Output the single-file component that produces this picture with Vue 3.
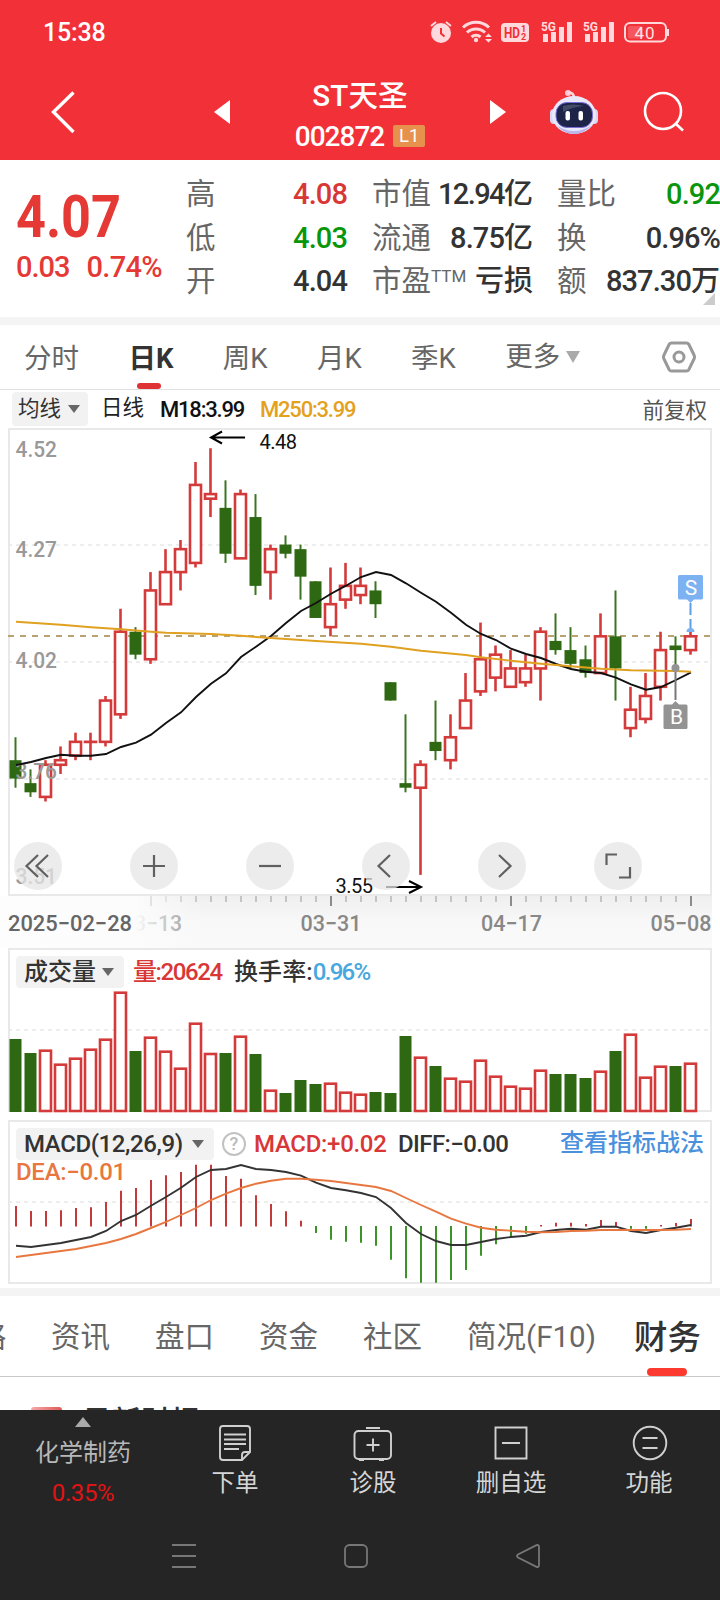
<template>
  <div class="page">
    <header class="top">
      <div class="status">
        <span class="clock">15:38</span>
        <svg class="status-icons" width="262" height="30" viewBox="420 16 262 30">
          <!-- alarm -->
          <circle cx="441" cy="33" r="10" class="soft" />
          <path d="M441 28v5.5l3.5 3" class="cut" />
          <path d="M431 26l5-4M451 26l-5-4" class="soft-line" />
          <!-- wifi -->
          <path d="M463 27.500a19 19 0 0 1 26 0M467 32.500a13 13 0 0 1 18 0M471.500 37a7 7 0 0 1 9 0" class="soft-line thick" />
          <circle cx="476" cy="40" r="2.200" class="soft" />
          <path d="M485 37l3.500-3.500l3.500 3.500zM485 39l3.500 3.500l3.500-3.500z" class="soft" />
          <!-- hd -->
          <rect x="501" y="23" width="28" height="19" rx="4" class="soft" />
          <text x="504" y="38" class="hd" textLength="16" lengthAdjust="spacingAndGlyphs">HD</text>
          <text x="521" y="31.500" class="hd-small">1</text>
          <text x="521" y="40" class="hd-small">2</text>
          <!-- signal x2 -->
          <g v-for="x in [541, 583]" :key="x">
            <text :x="x" y="31" class="net" textLength="15" lengthAdjust="spacingAndGlyphs">5G</text>
            <path :d="`M${x + 2} 34h5v8h-5zM${x + 10} 32h5v10h-5zM${x + 18} 27h5v15h-5zM${x + 26} 22h5v20h-5z`" class="soft" />
          </g>
          <!-- battery -->
          <rect x="625" y="23" width="41" height="18.500" rx="5" class="soft-line" />
          <rect x="628" y="26" width="15" height="12.500" rx="2" class="charge" />
          <path d="M668 29v7" class="soft-line" />
          <text x="634.500" y="38.500" class="battery" textLength="20">40</text>
        </svg>
      </div>

      <div class="title-bar">
        <svg class="back" width="30" height="48" viewBox="48 86 30 48">
          <path d="M73.500 90.500L53.500 110L73.500 130" />
        </svg>
        <svg class="prev" width="16" height="24" viewBox="0 0 16 24"><path d="M16 0v24L0 12z" /></svg>
        <div class="stock">
          <div class="name">ST天圣</div>
          <div class="code"><span>002872</span><em>L1</em></div>
        </div>
        <svg class="next" width="16" height="24" viewBox="0 0 16 24"><path d="M0 0v24l16-12z" /></svg>
        <svg class="robot" width="50" height="46" viewBox="549 87 50 46">
          <circle cx="568" cy="91" r="3" fill="#ffc8d4" />
          <path d="M568 91q6-1 6 5" fill="none" stroke="#ffd5de" stroke-width="2.500" />
          <rect x="550" y="107" width="8" height="15" rx="4" fill="#d6d7f5" />
          <rect x="590" y="107" width="8" height="15" rx="4" fill="#d6d7f5" />
          <ellipse cx="574" cy="113" rx="22" ry="19" fill="#e9e9fb" />
          <path d="M556 123q18 12 36 0q-8 9-18 9t-18-9z" fill="#b9b7ec" />
          <rect x="556" y="100.500" width="36.500" height="25" rx="11" fill="#1d2448" stroke="#7a6fd8" stroke-width="1" />
          <path d="M563 104q10-3 21 0q-12 1-21 6z" fill="#444b68" />
          <rect x="565.500" y="109" width="4.500" height="9.500" rx="2" fill="#fff" />
          <rect x="578.500" y="109" width="4.500" height="9.500" rx="2" fill="#fff" />
        </svg>
        <svg class="search" width="44" height="44" viewBox="642 90 44 44">
          <circle cx="663" cy="111" r="18" />
          <path d="M675.500 123.500L683 130.500" />
        </svg>
      </div>
    </header>

    <section class="quote">
      <div class="last">
        <div class="price">4.07</div>
        <div class="change"><span>0.03</span><span>0.74%</span></div>
      </div>
      <div v-for="(col, c) in quoteCols" :key="c" class="quote-col">
        <div v-for="row in col" :key="row.label" class="quote-row">
          <span class="label">{{ row.label }}<sup v-if="row.sup">{{ row.sup }}</sup></span>
          <span class="value" :class="row.tone">{{ row.value }}<b v-if="row.unit">{{ row.unit }}</b></span>
        </div>
      </div>
      <i class="corner"></i>
    </section>

    <nav class="periods">
      <span v-for="p in periods" :key="p" :class="{ active: p === '日K' }">{{ p }}</span>
      <span class="more">更多<i></i></span>
      <svg class="gear" width="34" height="32" viewBox="663 341 34 32">
        <path d="M672.500 343h15q1.500 0 2.300 1.300l5.200 10.700q1 2 0 4l-5.200 10.700q-.8 1.300-2.300 1.300h-15q-1.500 0-2.300-1.300l-5.200-10.700q-1-2 0-4l5.200-10.700q.8-1.300 2.300-1.300z" />
        <circle cx="680" cy="357" r="5" />
      </svg>
    </nav>

    <div class="ma-bar">
      <span class="pill">均线<i></i></span>
      <span class="ma-name">日线</span>
      <span class="ma18">M18:3.99</span>
      <span class="ma250">M250:3.99</span>
      <span class="adjust">前复权</span>
    </div>

    <div class="panel">
      <svg class="chart" width="720" height="520" viewBox="0 428 720 520">
        <defs>
          <linearGradient id="axisBg" x1="0" y1="0" x2="0" y2="1">
            <stop offset="0" stop-color="#efefef" />
            <stop offset=".5" stop-color="#f8f8f8" />
            <stop offset="1" stop-color="#fafafa" />
          </linearGradient>
          <linearGradient id="axisFade" x1="0" y1="0" x2="1" y2="0">
            <stop offset="0" stop-color="#fdfdfd" />
            <stop offset=".66" stop-color="#fcfcfc" />
            <stop offset="1" stop-color="#fafafa" stop-opacity="0" />
          </linearGradient>
        </defs>

        <rect x="9" y="429" width="702" height="466" class="frame" />
        <path d="M8 545H710M8 662H710M8 779H710" class="grid" />
        <path d="M8 636H712" class="last-line" />

        <g v-for="(k, i) in candles" :key="i" :class="k[0] ? 'up' : 'down'">
          <path :d="`M${cx(i)} ${py(k[1])}V${py(k[4])}`" class="wick" />
          <rect
            :x="cx(i) - (k[0] ? 5.500 : 6)"
            :y="py(k[2])"
            :width="k[0] ? 11 : 12"
            :height="Math.max(py(k[3]) - py(k[2]), k[0] ? 0.1 : 2)"
            class="body"
          />
        </g>

        <text v-for="t in priceLabels" :key="t.text" x="15.500" :y="t.y" class="axis-label" textLength="41.500" lengthAdjust="spacingAndGlyphs">{{ t.text }}</text>

        <polyline :points="line(ma18)" class="ma18-line" />
        <polyline :points="ma250.map(([i, y]) => `${cx(i) + 0.5},${y}`).join(' ')" class="ma250-line" />

        <!-- high / low markers -->
        <path d="M245 437.500H211M222 431.500L211 437.500L222 443.500" class="arrow" />
        <text x="259.500" y="449" class="mark" textLength="37.500">4.48</text>
        <path d="M386 887H421M409 881L421 887L409 893" class="arrow" />
        <text x="335.500" y="893" class="mark" textLength="37.500">3.55</text>

        <!-- trade markers -->
        <path d="M690.500 603V615M690.500 619V630" class="sell-line" />
        <path d="M686.500 632a4 4 0 0 1 8 0z" class="sell" />
        <path d="M678 576.500q0-1.500 1.500-1.500h22q1.500 0 1.500 1.500v21.500q0 1.500-1.500 1.500h-7.500l-3.500 3.500l-3.500-3.500h-7.500q-1.500 0-1.500-1.500z" class="sell" />
        <text x="691" y="594.500" class="flag">S</text>
        <circle cx="675.500" cy="668" r="4" class="buy" />
        <path d="M675.500 672V700" class="buy-line" />
        <path d="M665 704.500h7l3.500-3.500l3.500 3.500h7q1.500 0 1.500 1.500v21.500q0 1.500-1.500 1.500h-21q-1.500 0-1.500-1.500v-21.500q0-1.500 1.500-1.500z" class="buy" />
        <text x="676.500" y="724" class="flag">B</text>

        <!-- date axis -->
        <rect x="0" y="896" width="712" height="52" fill="url(#axisBg)" />
        <path v-for="i in ticks" :key="i" :d="`M${cx(i) + 0.5} 896V${i % 12 === 9 ? 906 : 902}`" :class="i % 12 === 9 ? 'tick major' : 'tick'" />
        <text x="122" y="931" class="date" textLength="60" lengthAdjust="spacingAndGlyphs">03−13</text>
        <rect x="0" y="896" width="205" height="52" fill="url(#axisFade)" />
        <text x="8" y="931" class="date first" textLength="124" lengthAdjust="spacingAndGlyphs">2025−02−28</text>
        <text x="300.500" y="931" class="date" textLength="61" lengthAdjust="spacingAndGlyphs">03−31</text>
        <text x="481" y="931" class="date" textLength="61" lengthAdjust="spacingAndGlyphs">04−17</text>
        <text x="650.500" y="931" class="date" textLength="61" lengthAdjust="spacingAndGlyphs">05−08</text>
      </svg>

      <div class="tools">
        <button v-for="d in toolIcons" :key="d">
          <svg width="48" height="48" viewBox="0 0 48 48"><path :d="d" /></svg>
        </button>
      </div>
    </div>

    <div class="panel">
      <svg class="chart" width="720" height="172" viewBox="0 948 720 172">
        <rect x="9" y="949" width="702" height="162" class="frame" />
        <path d="M8 1030H710" class="grid" />
        <g v-for="(h, i) in volumes" :key="i" :class="candles[i][0] ? 'up' : 'down'">
          <rect v-if="candles[i][0]" :x="cx(i) - 5.500" :y="1113 - h" width="11" :height="h - 2" class="body" />
          <rect v-else :x="cx(i) - 6" :y="1112 - h" width="12" :height="h" class="body" />
        </g>
      </svg>
      <div class="legend vol-legend">
        <span class="pill">成交量<i></i></span>
        <span class="red vol">量:20624</span>
        <span class="turn">换手率:</span>
        <span class="blue">0.96%</span>
      </div>
    </div>

    <div class="panel">
      <svg class="chart" width="720" height="168" viewBox="0 1120 720 168">
        <rect x="9" y="1121" width="702" height="162" class="frame" />
        <path d="M8 1202H710" class="grid" />
        <path v-for="(v, i) in macd" :key="i" :d="`M${cx(i) + 0.5} ${v > 0 ? 1226.500 : 1226}V${1226 - v}`" :class="v > 0 ? 'macd-up' : 'macd-down'" />
        <polyline :points="line(diff)" class="diff-line" />
        <polyline :points="line(dea)" class="dea-line" />
      </svg>
      <div class="legend macd-legend">
        <span class="pill">MACD(12,26,9)<i></i></span>
        <span class="help">?</span>
        <span class="red macd-value">MACD:+0.02</span>
        <span class="diff">DIFF:−0.00</span>
        <a>查看指标战法</a>
      </div>
      <div class="dea">DEA:−0.01</div>
    </div>

    <nav class="sections">
      <span v-for="s in sections" :key="s" :class="{ active: s === '财务' }">{{ s }}</span>
    </nav>
    <div class="report">
      <i></i><span>最新财报</span>
    </div>

    <footer class="bottom">
      <div class="actions">
        <div class="industry">
          <i></i>
          <span>化学制药</span>
          <em>0.35%</em>
        </div>
        <div class="action">
          <svg width="40" height="40" viewBox="215 1423 40 40">
            <path d="M223 1426h24q3 0 3 3v23l-8 8h-19q-3 0-3-3v-28q0-3 3-3zM250 1452h-5q-3 0-3 3v5" />
            <path d="M224 1434.500h22M224 1439.500h22M224 1444h22M224 1449h15" />
          </svg>
          <span>下单</span>
        </div>
        <div class="action">
          <svg width="40" height="40" viewBox="353 1423 40 40">
            <rect x="354.500" y="1431" width="36.500" height="28" rx="4" />
            <path d="M366 1428h14M366.500 1445h13M373 1438.500v13M359 1460h5M379 1460h5" />
          </svg>
          <span>诊股</span>
        </div>
        <div class="action">
          <svg width="40" height="40" viewBox="491 1423 40 40">
            <path d="M495.500 1427.500h31v31h-31zM502 1443h18" />
          </svg>
          <span>删自选</span>
        </div>
        <div class="action">
          <svg width="40" height="40" viewBox="629 1423 40 40">
            <circle cx="650" cy="1443" r="16.300" />
            <path d="M642.500 1438h15M642.500 1448h15" />
          </svg>
          <span>功能</span>
        </div>
      </div>
      <div class="system">
        <svg width="24" height="24" viewBox="0 0 24 24"><path d="M0 1h24M0 12h24M0 23h24" /></svg>
        <svg width="24" height="24" viewBox="0 0 24 24"><rect x="1" y="1" width="22" height="22" rx="4.500" /></svg>
        <svg width="24" height="24" viewBox="0 0 24 24"><path d="M20.500 1.200Q23 .4 23 3V21Q23 23.600 20.500 22.800L2 13.500Q0 12 2 10.500z" /></svg>
      </div>
    </footer>
  </div>
</template>

<script setup>
const quoteCols = [
  [
    { label: '高', value: '4.08', tone: 'red' },
    { label: '低', value: '4.03', tone: 'green' },
    { label: '开', value: '4.04' },
  ],
  [
    { label: '市值', value: '12.94', unit: '亿' },
    { label: '流通', value: '8.75', unit: '亿' },
    { label: '市盈', sup: 'TTM', value: '', unit: '亏损' },
  ],
  [
    { label: '量比', value: '0.92', tone: 'green' },
    { label: '换', value: '0.96%' },
    { label: '额', value: '837.30', unit: '万' },
  ],
];

const periods = ['分时', '日K', '周K', '月K', '季K'];
const sections = ['策略', '资讯', '盘口', '资金', '社区', '简况(F10)', '财务'];

const priceLabels = [
  { text: '4.52', y: 457 },
  { text: '4.27', y: 557 },
  { text: '4.02', y: 668 },
  { text: '3.76', y: 779 },
  { text: '3.51', y: 884 },
];

// [rising, high, body top, body bottom, low], prices in cents
const candles = [
  [0, 385, 380, 376, 374], [0, 378, 375, 373, 372], [1, 380, 379, 372, 371], [1, 383, 380, 379, 377],
  [1, 386, 384, 381, 380], [1, 386, 384, 384, 380], [1, 394, 393, 384, 383], [1, 413, 408, 390, 389],
  [0, 409, 408, 403, 402], [1, 421, 417, 402, 401], [1, 426, 421, 414, 414], [1, 428, 426, 421, 417],
  [1, 445, 440, 423, 422], [1, 448, 438, 437, 433], [0, 441, 435, 425, 423], [1, 439, 438, 424, 424],
  [0, 438, 433, 418, 416], [1, 427, 426, 421, 415], [0, 429, 427, 425, 424], [0, 427, 426, 420, 415],
  [0, 419, 419, 411, 411], [1, 422, 414, 409, 407], [1, 423, 418, 415, 413], [1, 422, 418, 416, 414],
  [0, 419, 417, 414, 411], [0, 397, 397, 393, 393], [0, 390, 375, 374, 373], [1, 380, 379, 374, 355],
  [0, 393, 384, 382, 380], [1, 390, 385, 380, 378], [1, 399, 393, 387, 387], [1, 410, 402, 395, 394],
  [1, 405, 403, 398, 395], [1, 404, 400, 396, 396], [1, 403, 400, 397, 396], [1, 409, 408, 400, 393],
  [0, 412, 406, 404, 403], [0, 409, 404, 401, 400], [0, 405, 402, 399, 398], [1, 412, 407, 399, 399],
  [0, 417, 407, 400, 393], [1, 396, 391, 387, 385], [1, 399, 394, 389, 388], [1, 408, 404, 396, 393],
  [0, 407, 405, 404, 400], [1, 408, 407, 404, 403],
];

const ma18 = [
  765, 762, 758, 754.7, 755.7, 755.7, 754, 747, 742.7, 734.7, 723, 712.3, 697, 683.7, 673.3, 657,
  646.7, 636, 623, 611, 603, 593.7, 585.7, 577, 572, 575, 583.3, 592.7, 601.7, 612.7, 624.7, 634,
  640, 648.7, 654, 658, 664, 669, 671.7, 673, 677.7, 684.3, 689.7, 687, 680, 672.3,
];

const ma250 = [
  [0, 621.7], [3, 624.7], [5, 627.3], [7, 629.3], [9, 631.7], [10, 632.7], [13, 634], [15, 635.7],
  [16, 637], [20, 641], [23, 643.7], [25, 646.7], [27, 650.7], [30, 655], [31, 657.3], [33, 660.7],
  [35, 663.7], [37, 666.3], [39, 668.7], [41, 670.3], [43, 670.7], [44, 671], [45, 671.7],
];

const volumes = [
  73, 59, 62.3, 48.3, 54.3, 63.3, 73.3, 120.3, 61, 75.3, 61.3, 44.3, 89.3, 59, 59, 76.3, 58, 22.3,
  19, 32, 28, 29.3, 20.3, 18.3, 20, 19, 76, 55.3, 46, 34.3, 31.3, 52.3, 36.3, 26.3, 24.3, 42.3, 38,
  38, 34, 41.3, 61, 78.3, 35.3, 46.3, 46, 49.3,
];

const macd = [
  20, 15, 15, 15.7, 18, 18.7, 24, 35.3, 38, 46, 50.7, 54, 61.3, 61.3, 50, 47.3, 30.7, 22, 14.7, 5.3,
  -7, -13.7, -15.7, -16.7, -19.7, -33.7, -52.3, -56.7, -56.7, -54, -44, -29.7, -18.3, -11.7, -7.7,
  1, 3.3, 3.3, 2, 6, 4, -2.7, -2.7, 1, 3, 7,
];

const diff = [
  1245.7, 1247, 1245, 1243, 1240, 1237, 1231, 1221, 1215, 1205.7, 1197, 1187.7, 1177, 1170, 1169,
  1165, 1169, 1170, 1172, 1175.7, 1182.7, 1188, 1190.3, 1193, 1197, 1208, 1223, 1234, 1241, 1245,
  1245, 1242, 1239, 1237, 1235.7, 1232, 1230, 1228.7, 1229.7, 1226.7, 1226.7, 1231, 1233, 1230,
  1227.7, 1225,
];

const dea = [
  1257, 1255, 1253, 1251, 1249, 1246, 1243, 1239, 1234, 1228, 1222, 1215, 1208, 1200, 1193.7, 1188,
  1183.7, 1180.7, 1178.7, 1178.7, 1179.7, 1181, 1183, 1185, 1187, 1191, 1198, 1205, 1211.7, 1218.7,
  1223.7, 1227.7, 1229.7, 1230.7, 1231.7, 1232.3, 1232, 1231, 1230.7, 1230, 1230, 1230, 1230, 1230,
  1229.7, 1229,
];

const toolIcons = [
  'M24 13L12.500 24L24 35M34 13L22.500 24L34 35',
  'M13 24H35M24 13V35',
  'M13 24H35',
  'M28 13L16.500 24L28 35',
  'M21 13L32.500 24L21 35',
  'M12.500 23V12.500H23M36 25V35.500H25',
];

// date axis starts at the tenth candle
const ticks = Array.from({ length: 37 }, (_, i) => i + 9);

const cx = (i) => 15.5 + i * 15;
const py = (cents) => 420 + (454.15 - cents) * 4.588;
const line = (ys) => ys.map((y, i) => `${cx(i) + 0.5},${y}`).join(' ');
</script>

<style>
body {
  margin: 0;
  background: #fff;
}
</style>

<style scoped>
.page {
  width: 720px;
  height: 1600px;
  overflow: hidden;
  background: #fff;
  font-family: Roboto, "Noto Sans CJK SC", sans-serif;
  color: #333;
}

svg {
  display: block;
  flex: none;
}

i,
em,
sup {
  font-style: normal;
}

/* ---- header ---- */
.top {
  height: 160px;
  background: #f23038;
  color: #fff;
}

.status {
  display: flex;
  justify-content: space-between;
  align-items: center;
  height: 64px;
  padding: 0 38px 0 43px;
}

.clock {
  padding-top: 1px;
  font-size: 25px;
  font-weight: 500;
  letter-spacing: -0.2px;
}

.status-icons {
  margin-top: -2px;
}

.soft {
  fill: #ffd9db;
}

.soft-line {
  fill: none;
  stroke: #ffd9db;
  stroke-width: 2;
}

.soft-line.thick {
  stroke-width: 3;
}

.cut {
  fill: none;
  stroke: #f23038;
  stroke-width: 2;
}

.charge {
  fill: #f5555c;
}

.hd {
  font-size: 15px;
  font-weight: 700;
  fill: #f23038;
}

.hd-small {
  font-size: 9px;
  font-weight: 700;
  fill: #f23038;
}

.net {
  font-size: 13px;
  font-weight: 700;
  fill: #ffd9db;
}

.battery {
  font-size: 17px;
  fill: #ffe3e4;
}

.title-bar {
  display: flex;
  align-items: center;
  height: 96px;
}

.back {
  margin-left: 48px;
}

.back path,
.search circle,
.search path {
  fill: none;
  stroke: #fff;
  stroke-width: 3.4;
}

.prev {
  margin-left: 136px;
}

.prev path,
.next path {
  fill: #fff;
}

.stock {
  width: 260px;
  display: flex;
  flex-direction: column;
  align-items: center;
  padding-top: 8px;
}

.name {
  height: 40px;
  line-height: 40px;
  font-size: 29.5px;
  font-weight: 500;
  letter-spacing: 0.2px;
}

.code {
  display: flex;
  align-items: center;
  gap: 9px;
  height: 40px;
  font-size: 28px;
  font-weight: 500;
}

.code span {
  letter-spacing: -1px;
}

.code em {
  width: 32px;
  height: 22px;
  line-height: 22px;
  text-align: center;
  border-radius: 2px;
  background: #e6914d;
  font-size: 18.5px;
  font-weight: 400;
}

.robot {
  margin-left: 43px;
}

.search {
  margin-left: 43px;
}

.search circle,
.search path {
  stroke-width: 2.6;
}

/* ---- quote ---- */
.quote {
  position: relative;
  display: flex;
  height: 144px;
  padding-top: 13px;
  border-bottom: 8px solid #f4f4f4;
}

.last {
  width: 170px;
  padding-left: 17px;
  color: #e53935;
}

.price {
  height: 70px;
  line-height: 70px;
  margin-top: 9px;
  margin-left: -1px;
  font-size: 60px;
  font-weight: 700;
  transform: scaleX(0.87);
  transform-origin: left;
}

.change {
  display: flex;
  gap: 17px;
  height: 34px;
  line-height: 34px;
  font-size: 29px;
  font-weight: 500;
  letter-spacing: -1px;
  margin-top: -2px;
  margin-left: -1px;
}

.change span + span {
  letter-spacing: -0.7px;
}

.quote-col {
  width: 160px;
}

.quote-col + .quote-col {
  margin-left: 26px;
}

.quote-col:nth-child(4) {
  width: 162px;
  margin-left: 25px;
}

.quote-row {
  display: flex;
  justify-content: space-between;
  height: 43.5px;
  line-height: 43.5px;
  white-space: nowrap;
}

.label {
  margin-left: -1px;
  font-size: 29.5px;
  color: #666;
}

.label sup {
  display: inline-block;
  font-size: 17px;
  line-height: 17px;
  vertical-align: 9px;
}

.value {
  font-size: 29px;
  font-weight: 500;
  letter-spacing: -0.9px;
}

.quote-col:nth-child(3) .quote-row:first-child .value {
  letter-spacing: -1.6px;
}

.value b {
  font-weight: 500;
  letter-spacing: 0;
}

.red {
  color: #d93636;
}

.green {
  color: #0a960a;
}

.corner {
  position: absolute;
  right: 5px;
  bottom: 12px;
  border-left: 12px solid transparent;
  border-bottom: 12px solid #ccc;
}

/* ---- period tabs ---- */
.periods {
  display: flex;
  align-items: center;
  height: 64px;
  padding-left: 24px;
  border-bottom: 1px solid #e2e2e2;
  font-size: 27.500px;
  color: #666;
}

.periods span {
  position: relative;
  height: 64px;
  line-height: 68px;
  margin-right: 49.4px;
}

.periods .active {
  font-weight: 700;
  color: #333;
}

.periods .active::after {
  content: "";
  position: absolute;
  left: 9px;
  bottom: 0;
  width: 24px;
  height: 6px;
  border-radius: 3px;
  background: #df3235;
}

.periods .more {
  display: flex;
  align-items: center;
  gap: 6px;
  margin-right: 82px;
}

.more i {
  border: 7.5px solid transparent;
  border-top: 12px solid #aaa;
  border-bottom: 0;
}

.gear path,
.gear circle {
  fill: none;
  stroke: #999;
  stroke-width: 3;
}

/* ---- moving average bar ---- */
.ma-bar {
  display: flex;
  align-items: center;
  height: 38px;
  padding: 0 13px 0 12px;
  font-size: 21.5px;
}

.pill {
  display: flex;
  align-items: center;
  border-radius: 4px;
  background: #f2f2f2;
  box-sizing: border-box;
}

.pill i {
  border: 6px solid transparent;
  border-top: 8px solid #666;
  border-bottom: 0;
}

.ma-bar .pill {
  width: 76px;
  height: 34px;
  padding-left: 6px;
  gap: 7px;
  line-height: 32px;
}

.ma-name {
  margin-left: 13px;
  width: 59px;
  line-height: 34px;
  padding-bottom: 2px;
  color: #222;
}

.ma18,
.ma250 {
  font-size: 22px;
  font-weight: 500;
  letter-spacing: -1.2px;
  color: #111;
  width: 100px;
}

.ma250 {
  color: #e3a11c;
}

.adjust {
  margin-left: auto;
  padding-bottom: 2px;
  color: #555;
}

/* ---- charts ---- */
.panel {
  position: relative;
}

.frame {
  fill: #fff;
  stroke: #e9e9e9;
  stroke-width: 2;
}

.grid {
  stroke: #e8e8e8;
  stroke-width: 1.5;
  stroke-dasharray: 4 4;
}

.last-line {
  stroke: #b8a272;
  stroke-width: 2;
  stroke-dasharray: 6 6;
}

.wick {
  stroke-width: 2;
}

.up .wick {
  stroke: #d43a3a;
  stroke-width: 2.6;
}

.up .body {
  fill: #fff;
  stroke: #d43a3a;
  stroke-width: 2.6;
}

.down .wick {
  stroke: #3c7422;
}

.down .body {
  fill: #2f6813;
}

.axis-label {
  font-size: 22.5px;
  font-weight: 500;
  fill: #999;
}

.ma18-line,
.ma250-line,
.diff-line,
.dea-line {
  fill: none;
  stroke: #111;
  stroke-width: 1.9;
}

.ma250-line {
  stroke: #e0a020;
}

.diff-line {
  stroke: #333;
}

.dea-line {
  stroke: #e8773f;
}

.arrow {
  fill: none;
  stroke: #000;
  stroke-width: 2;
}

.mark {
  font-size: 20px;
  fill: #111;
}

.sell {
  fill: #7cb2f2;
}

.sell-line {
  stroke: #5b9fe8;
  stroke-width: 2;
}

.buy {
  fill: #939393;
}

.buy-line {
  stroke: #777;
  stroke-width: 2;
}

.flag {
  font-size: 21px;
  fill: #fff;
  text-anchor: middle;
}

.tick {
  stroke: #c4c4c4;
  stroke-width: 2;
}

.tick.major {
  stroke: #8c8c8c;
}

.date {
  font-size: 22.5px;
  font-weight: 500;
  fill: #888;
}

.date.first {
  fill: #666;
}

.macd-up {
  stroke: #c23a3a;
  stroke-width: 2;
}

.macd-down {
  stroke: #3c9428;
  stroke-width: 2;
}

.tools {
  position: absolute;
  left: 14px;
  top: 414px;
  display: flex;
  gap: 68px;
}

.tools button {
  width: 48px;
  height: 48px;
  padding: 0;
  border: 0;
  border-radius: 50%;
  background: rgba(230, 230, 230, 0.75);
}

.tools path {
  fill: none;
  stroke: #606060;
  stroke-width: 2.2;
}

.legend {
  position: absolute;
  left: 16px;
  right: 16px;
  top: 8px;
  display: flex;
  align-items: center;
  height: 32px;
  line-height: 30px;
  font-size: 24px;
  white-space: nowrap;
}

.vol-legend .pill {
  width: 108px;
  height: 32px;
  padding: 0 0 1px 8px;
  gap: 6px;
}

.vol-legend > span,
.macd-legend > span {
  font-weight: 500;
}

.vol {
  width: 101px;
  margin-left: 9px;
  letter-spacing: -1.4px;
}

.turn {
  letter-spacing: 0.1px;
}

.blue {
  color: #47a8e0;
  letter-spacing: -1.7px;
}

.macd-legend .pill {
  width: 198px;
  height: 32px;
  padding-left: 8px;
  gap: 9px;
  letter-spacing: -0.4px;
}

.help {
  width: 20px;
  height: 20px;
  margin-left: 8px;
  border: 2px solid #c2c2c2;
  border-radius: 50%;
  line-height: 20px;
  font-size: 18px;
  text-align: center;
  color: #bbb;
}

.macd-value {
  width: 144px;
  margin-left: 8px;
  letter-spacing: -0.3px;
}

.diff {
  letter-spacing: -0.6px;
}

.macd-legend a {
  margin-left: auto;
  padding-bottom: 2px;
  font-weight: 500;
  color: #4a90dc;
}

.dea {
  position: absolute;
  left: 16px;
  top: 37px;
  line-height: 30px;
  font-size: 24px;
  font-weight: 500;
  letter-spacing: -0.3px;
  color: #e8773f;
}

/* ---- section tabs ---- */
.sections {
  display: flex;
  align-items: center;
  height: 80px;
  margin-left: -53px;
  border-top: 8px solid #f4f4f4;
  border-bottom: 1px solid #c8c8c8;
  font-size: 29.5px;
  color: #666;
}

.sections span {
  position: relative;
  height: 80px;
  line-height: 83px;
  margin-right: 45px;
  white-space: nowrap;
}

.sections .active {
  margin-left: -7px;
  font-size: 33.500px;
  font-weight: 500;
  color: #333;
}

.sections .active::after {
  content: "";
  position: absolute;
  left: 13px;
  bottom: 0;
  width: 40px;
  height: 8px;
  border-radius: 4px;
  background: #fc3a30;
}

.report {
  display: flex;
  gap: 20px;
  height: 33px;
  padding-left: 31px;
  overflow: hidden;
}

.report i {
  width: 31px;
  height: 20px;
  margin-top: 30px;
  border-radius: 3px;
  background: linear-gradient(to right, #f5a8a8, #e05a55);
}

.report span {
  margin-top: 25px;
  line-height: 40px;
  font-size: 29.5px;
  font-weight: 500;
}

/* ---- bottom bars ---- */
.bottom {
  position: relative;
  height: 190px;
  background: #252525;
}

.actions {
  display: grid;
  grid-template-columns: 166px repeat(4, 138px);
  height: 134px;
}

.industry,
.action {
  display: flex;
  flex-direction: column;
  align-items: center;
  font-size: 23.5px;
  color: #d6d6d6;
}

.industry i {
  margin-top: 7px;
  border: 8.5px solid transparent;
  border-bottom: 10px solid #aaa;
  border-top: 0;
}

.industry span {
  margin-top: 9px;
  line-height: 34px;
  font-size: 24px;
  color: #b8b8b8;
}

.industry em {
  margin-top: 6px;
  line-height: 34px;
  font-size: 24px;
  letter-spacing: -0.4px;
  color: #e01414;
}

.action svg {
  margin-top: 13px;
}

.action span {
  margin-top: 3px;
  line-height: 34px;
}

.action path,
.action circle,
.action rect {
  fill: none;
  stroke: #d0d0d0;
  stroke-width: 1.9;
}

.system {
  display: flex;
  gap: 148px;
  padding-left: 172px;
}

.system path,
.system rect {
  fill: none;
  stroke: #777;
  stroke-width: 1.8;
}
</style>
